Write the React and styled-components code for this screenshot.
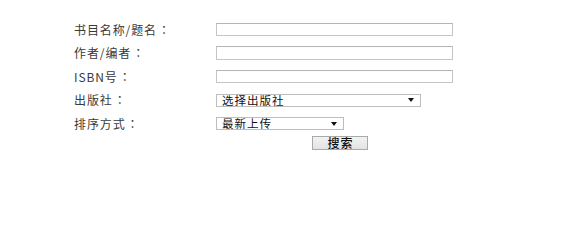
import React from "react";
import styled, { createGlobalStyle } from "styled-components";

const Global = createGlobalStyle`
  html, body { margin: 0; padding: 0; background: #fff; }
  body { font-family: "Noto Sans CJK SC", "Liberation Sans", sans-serif; }
`;

const Form = styled.form`
  display: grid;
  grid-template-columns: 143px 240px;
  grid-auto-rows: 23.5px;
  align-items: center;
  padding: 17.75px 0 0 73px;
`;

const Label = styled.label`
  font-family: "Noto Sans CJK SC", "Liberation Sans", sans-serif;
  font-size: 12px;
  color: #3a3a3a;
  letter-spacing: 0.9px;
  line-height: 14px;
  padding-left: 1px;
`;

const Colon = styled.span`
  font-family: "Noto Sans CJK TC", sans-serif;
  margin-left: 1px;
`;

const TextInput = styled.input`
  box-sizing: border-box;
  width: 237px;
  height: 13.5px;
  margin: 0;
  padding: 0 2px;
  border: 1px solid #c4c4c4;
  border-top-color: #b4b4b4;
  background: #fff;
  outline: none;
`;

const Select = styled.div`
  box-sizing: border-box;
  display: flex;
  align-items: center;
  width: ${(p) => p.$w}px;
  height: 13px;
  border: 1px solid #bdbdbd;
  background: #fff;
  padding: 0 6px 0 5px;
  font-family: "Noto Sans CJK SC", sans-serif;
  font-size: 11.5px;
  letter-spacing: 1px;
  color: #111;
  line-height: 11px;
`;

const SelectText = styled.span`
  flex: 1;
`;

const Arrow = styled.svg`
  width: 6px;
  height: 4px;
  flex: none;
`;

const ButtonRow = styled.div`
  grid-column: 2;
  height: 17px;
  display: flex;
  align-items: center;
  padding-left: 96px;
  align-self: start;
  margin-top: -1px;
`;

const Button = styled.button`
  box-sizing: border-box;
  width: 56px;
  height: 14px;
  margin: 0;
  padding: 0 0 0 1px;
  border: 1px solid #a9a9a9;
  background: linear-gradient(#f2f2f2, #e3e3e3);
  font-family: "Noto Sans CJK SC", sans-serif;
  font-size: 12px;
  font-weight: 500;
  letter-spacing: 1px;
  color: #111;
  line-height: 12px;
`;

const FakeSelect = ({ w, text }) => (
  <Select $w={w}>
    <SelectText>{text}</SelectText>
    <Arrow viewBox="0 0 6 4">
      <polygon points="0,0 6,0 3,4" fill="#111" />
    </Arrow>
  </Select>
);

const Field = ({ text }) => (
  <Label>
    {text}
    <Colon>：</Colon>
  </Label>
);

export default function App() {
  return (
    <>
      <Global />
      <Form onSubmit={(e) => e.preventDefault()}>
        <Field text="书目名称/题名" />
        <TextInput type="text" />
        <Field text="作者/编者" />
        <TextInput type="text" />
        <Field text="ISBN号" />
        <TextInput type="text" />
        <Field text="出版社" />
        <FakeSelect w={205} text="选择出版社" />
        <Field text="排序方式" />
        <FakeSelect w={128} text="最新上传" />
        <ButtonRow>
          <Button type="submit">搜索</Button>
        </ButtonRow>
      </Form>
    </>
  );
}
